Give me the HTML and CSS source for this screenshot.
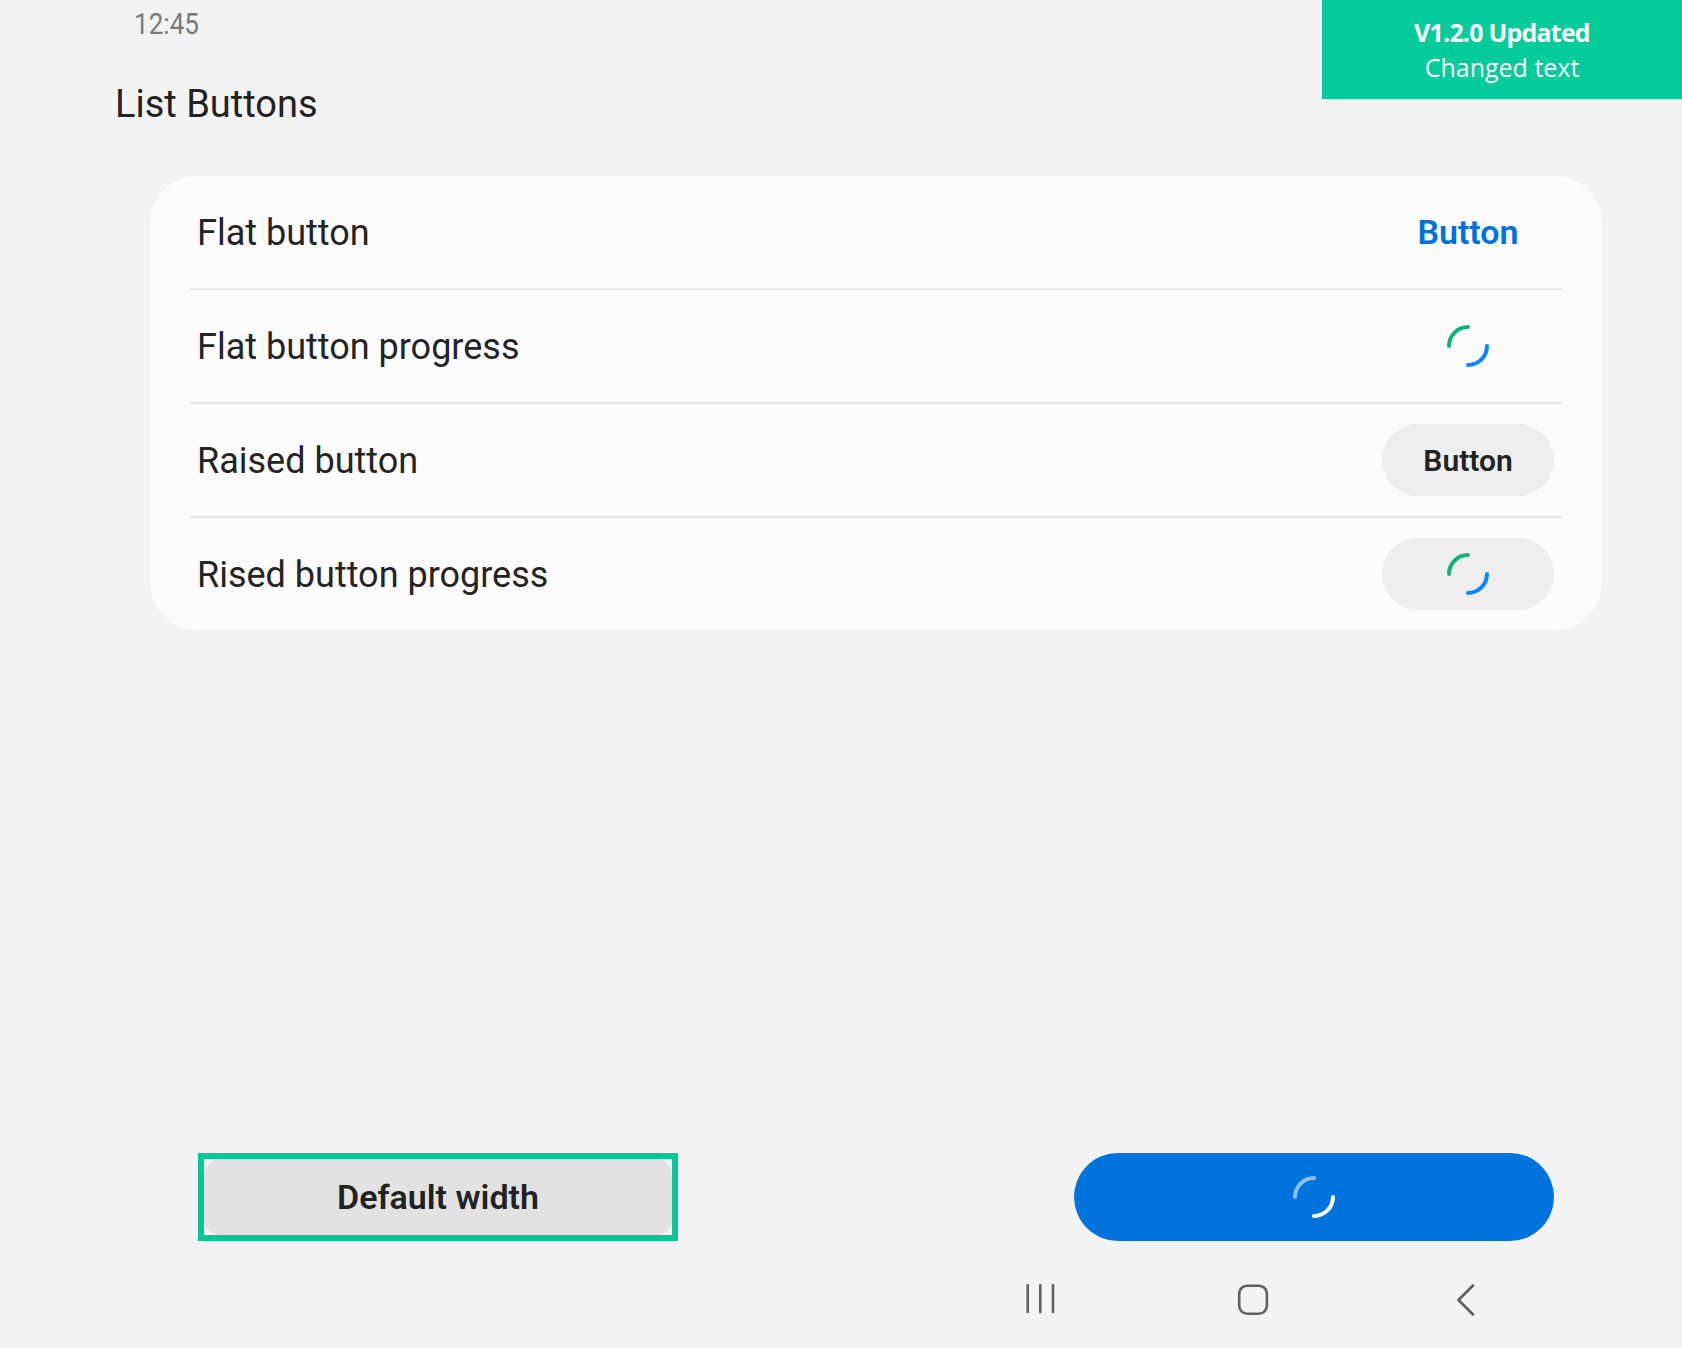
FILE: index.html
```html
<!DOCTYPE html>
<html>
<head>
<meta charset="utf-8">
<title>List Buttons</title>
<link rel="stylesheet" href="styles.css">
</head>
<body>
<div class="screen">
  <div class="status"><span class="clock">12:45</span></div>
  <div class="banner">
    <div class="banner-title">V1.2.0 Updated</div>
    <div class="banner-sub">Changed text</div>
  </div>
  <h1 class="title">List Buttons</h1>
  <div class="card">
    <div class="row">
      <span class="label">Flat button</span>
      <div class="control"><span class="flat-btn">Button</span></div>
    </div>
    <div class="row">
      <span class="label">Flat button progress</span>
      <div class="control">
        <svg class="spinner" viewBox="0 0 44 44" width="44" height="44">
          <path d="M3 22 A19 19 0 0 1 22 3" class="arc-a"/>
          <path d="M41 22 A19 19 0 0 1 22 41" class="arc-b"/>
        </svg>
      </div>
    </div>
    <div class="row">
      <span class="label">Raised button</span>
      <div class="control"><span class="raised">Button</span></div>
    </div>
    <div class="row last">
      <span class="label">Rised button progress</span>
      <div class="control">
        <span class="raised">
          <svg class="spinner" viewBox="0 0 44 44" width="44" height="44">
            <path d="M3 22 A19 19 0 0 1 22 3" class="arc-a"/>
            <path d="M41 22 A19 19 0 0 1 22 41" class="arc-b"/>
          </svg>
        </span>
      </div>
    </div>
  </div>
  <div class="spacer"></div>
  <div class="bottom">
    <div class="default-btn"><div class="default-fill">Default width</div></div>
    <div class="primary-btn">
      <svg class="spinner" viewBox="0 0 44 44" width="44" height="44">
        <path d="M3 22 A19 19 0 0 1 22 3" class="arc-w1"/>
        <path d="M41 22 A19 19 0 0 1 22 41" class="arc-w2"/>
      </svg>
    </div>
  </div>
  <nav class="nav">
    <svg class="nav-icon" viewBox="0 0 60 40" width="60" height="40">
      <line x1="17.7" y1="5.3" x2="17.7" y2="32" />
      <line x1="30.3" y1="5.3" x2="30.3" y2="32" />
      <line x1="43" y1="5.3" x2="43" y2="32" />
    </svg>
    <svg class="nav-icon" viewBox="0 0 60 40" width="60" height="40">
      <rect x="16.2" y="5.7" width="27.7" height="28" rx="8" ry="8"/>
    </svg>
    <svg class="nav-icon" viewBox="0 0 60 40" width="60" height="40">
      <polyline points="37,5.5 22.5,20 37,34.5"/>
    </svg>
  </nav>
</div>
</body>
</html>
```
FILE: styles.css
```css
html, body {
  margin: 0;
  padding: 0;
}
body {
  background: #f3f3f3;
  font-family: Roboto, "Liberation Sans", sans-serif;
  color: #242424;
}
.screen {
  position: relative;
  width: 1682px;
  height: 1348px;
  display: flex;
  flex-direction: column;
  overflow: hidden;
}
.status {
  height: 48px;
  line-height: 48px;
  padding-left: 134px;
  font-size: 29px;
  color: #7a7a7a;
}
.clock {
  display: inline-block;
  transform: scaleX(0.9);
  transform-origin: left center;
}
.banner {
  position: absolute;
  top: 0;
  right: 0;
  width: 360px;
  height: 99px;
  box-sizing: border-box;
  padding-top: 15px;
  background: #03cb9a;
  color: #ffffff;
  text-align: center;
  font-family: "Open Sans", "Noto Sans", sans-serif;
  line-height: 35px;
}
.banner-title {
  font-size: 25px;
  font-weight: 700;
  letter-spacing: -0.8px;
}
.banner-sub {
  font-size: 25px;
  font-weight: 400;
}
.title {
  margin: 0;
  padding: 31px 0 0 115px;
  font-size: 38px;
  line-height: 50px;
  font-weight: 400;
  color: #222222;
}
.card {
  margin: 47px 0 0 150px;
  width: 1452px;
  box-sizing: border-box;
  padding: 0 40px 0 40px;
  background: #fcfcfc;
  border-radius: 48px;
}
.row {
  display: flex;
  align-items: center;
  height: 112px;
  padding-left: 7px;
  border-bottom: 2px solid #e8e8e8;
}
.row.last {
  border-bottom: none;
}
.label {
  flex: 1;
  font-size: 36px;
  color: #242424;
  padding-top: 2px;
}
.control {
  width: 172px;
  margin-right: 8px;
  display: flex;
  justify-content: center;
  align-items: center;
}
.flat-btn {
  font-size: 34px;
  font-weight: 600;
  color: #0072de;
}
.raised {
  width: 172px;
  height: 72px;
  border-radius: 36px;
  background: #eeeeee;
  display: flex;
  justify-content: center;
  align-items: center;
  font-size: 30px;
  font-weight: 600;
  color: #222222;
}
.spinner {
  display: block;
  fill: none;
  stroke-width: 4;
  stroke-linecap: round;
}
.arc-a { stroke: #11b07f; }
.arc-b { stroke: #0a84ff; }
.arc-w1 { stroke: rgba(255, 255, 255, 0.55); }
.arc-w2 { stroke: #ffffff; }
.spacer {
  flex: 1;
}
.bottom {
  height: 88px;
  display: flex;
  justify-content: space-between;
  padding: 0 128px 0 198px;
}
.default-btn {
  width: 480px;
  height: 88px;
  box-sizing: border-box;
  border: 6px solid #06c897;
}
.default-fill {
  height: 100%;
  background: #e2e2e2;
  border-radius: 16px;
  display: flex;
  justify-content: center;
  align-items: center;
  font-size: 34px;
  font-weight: 600;
  color: #222222;
}
.primary-btn {
  width: 480px;
  height: 88px;
  border-radius: 44px;
  background: #0073dd;
  display: flex;
  justify-content: center;
  align-items: center;
}
.nav {
  height: 107px;
  box-sizing: border-box;
  padding: 39px 0 0 1010px;
  display: flex;
  align-items: flex-start;
  gap: 153px;
}
.nav-icon {
  display: block;
  fill: none;
  stroke: #606060;
  stroke-width: 2.6;
  stroke-linecap: round;
  stroke-linejoin: round;
}
```
